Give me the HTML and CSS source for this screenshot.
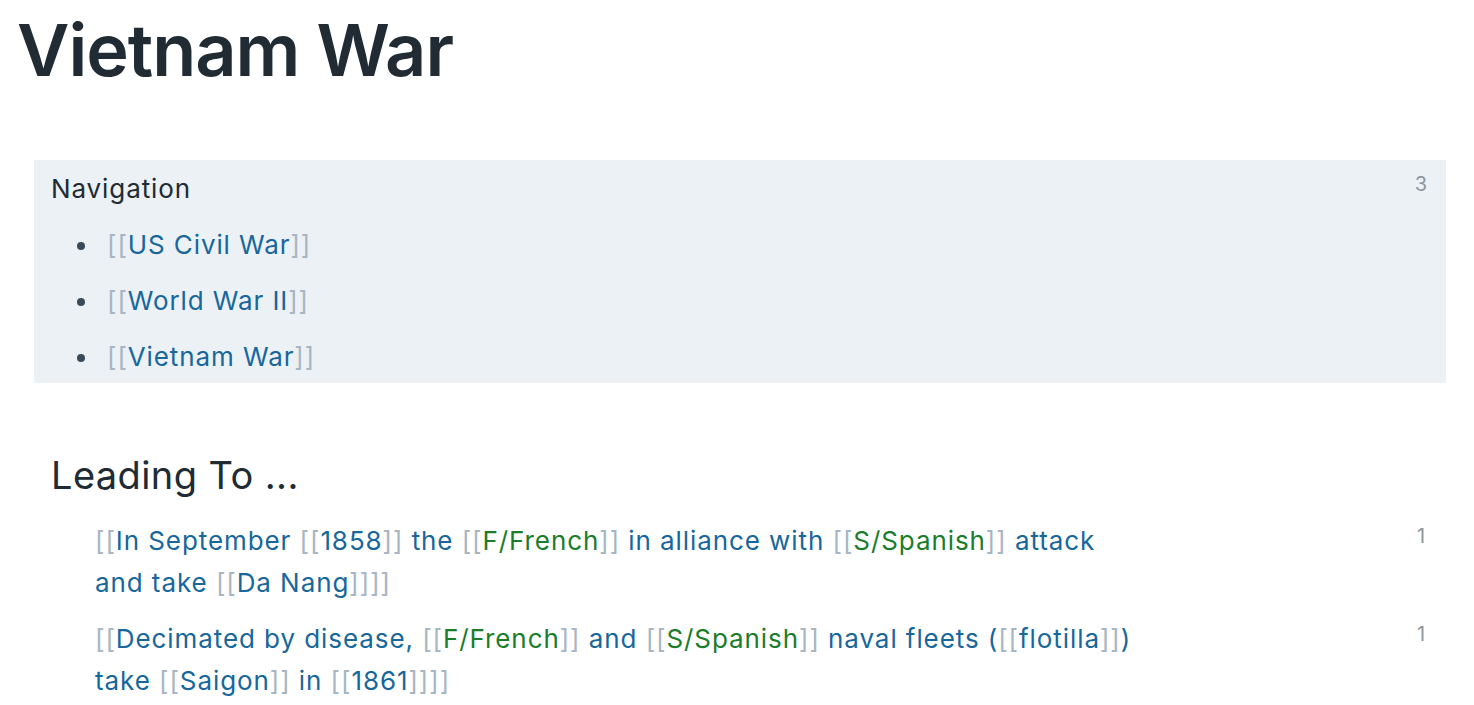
FILE: index.html
```html
<!DOCTYPE html>
<html>
<head>
<meta charset="utf-8">
<link rel="stylesheet" href="styles.css">
</head>
<body>
<div class="page">
  <h1 class="title">Vietnam War</h1>

  <div class="nav-block">
    <div class="nav-main">
      <div class="nav-head">Navigation</div>
      <ul class="nav-list">
        <li><span class="br">[[</span><span class="lk">US Civil War</span><span class="br">]]</span></li>
        <li><span class="br">[[</span><span class="lk">World War II</span><span class="br">]]</span></li>
        <li><span class="br">[[</span><span class="lk">Vietnam War</span><span class="br">]]</span></li>
      </ul>
    </div>
    <div class="count">3</div>
  </div>

  <h2 class="section">Leading To ...</h2>

  <div class="ref-row">
    <div class="ref-text"><span class="br">[[</span><span class="lk">In September <span class="br">[[</span>1858<span class="br">]]</span> the <span class="br">[[</span><span class="gr">F/French</span><span class="br">]]</span> in alliance with <span class="br">[[</span><span class="gr">S/Spanish</span><span class="br">]]</span> attack and take <span class="br">[[</span>Da Nang<span class="br">]]</span></span><span class="br">]]</span></div>
    <div class="count count-ref">1</div>
  </div>
  <div class="ref-row">
    <div class="ref-text"><span class="br">[[</span><span class="lk">Decimated by disease, <span class="br">[[</span><span class="gr">F/French</span><span class="br">]]</span> and <span class="br">[[</span><span class="gr">S/Spanish</span><span class="br">]]</span> naval fleets (<span class="br">[[</span>flotilla<span class="br">]]</span>) take <span class="br">[[</span>Saigon<span class="br">]]</span> in <span class="br">[[</span>1861<span class="br">]]</span></span><span class="br">]]</span></div>
    <div class="count count-ref">1</div>
  </div>
</div>
</body>
</html>
```

FILE: styles.css
```css
html, body {
  margin: 0;
  padding: 0;
  background: #ffffff;
}

body {
  font-family: Inter, "Noto Sans", sans-serif;
  color: #202b33;
}

.page {
  padding: 0 28px 0 34px;
}

.title {
  margin: 0 0 0 -17px;
  padding-top: 6px;
  font-size: 72px;
  font-weight: 600;
  line-height: 88px;
  letter-spacing: -1px;
  color: #202b33;
}

.nav-block {
  margin-top: 66px;
  background: #ebf1f5;
  display: flex;
  align-items: flex-start;
  padding: 11px 18px 0 17px;
  height: 212px;
}

.nav-main {
  flex: 1;
}

.nav-head {
  font-size: 26px;
  letter-spacing: 0.9px;
  line-height: 36px;
  color: #202b33;
}

.nav-list {
  list-style: none;
  margin: 10px 0 0 0;
  padding: 0 0 0 56px;
  font-size: 26px;
  letter-spacing: 0.9px;
  line-height: 56px;
}

.nav-list li {
  position: relative;
}

.nav-list li::before {
  content: "";
  position: absolute;
  left: -30px;
  top: 25px;
  width: 8px;
  height: 8px;
  border-radius: 50%;
  background: #394b59;
}

.count {
  font-size: 20px;
  line-height: 27px;
  color: #8f969b;
  width: 14px;
  text-align: center;
}

.count-ref {
  margin-top: 3px;
}

.br {
  color: #a7b6c2;
}

.lk {
  color: #17679c;
}

.gr {
  color: #1b7d2a;
}

.section {
  margin: 64px 0 0 17px;
  font-size: 38px;
  font-weight: 400;
  letter-spacing: 0.4px;
  line-height: 56px;
  color: #202b33;
}

.ref-row {
  display: flex;
  align-items: flex-start;
  padding: 17px 18px 0 61px;
}

.ref-row + .ref-row {
  padding-top: 14px;
}

.ref-text {
  flex: 1;
  max-width: 1045px;
  margin-right: auto;
  font-size: 26px;
  letter-spacing: 0.92px;
  line-height: 42px;
  color: #17679c;
}
```
